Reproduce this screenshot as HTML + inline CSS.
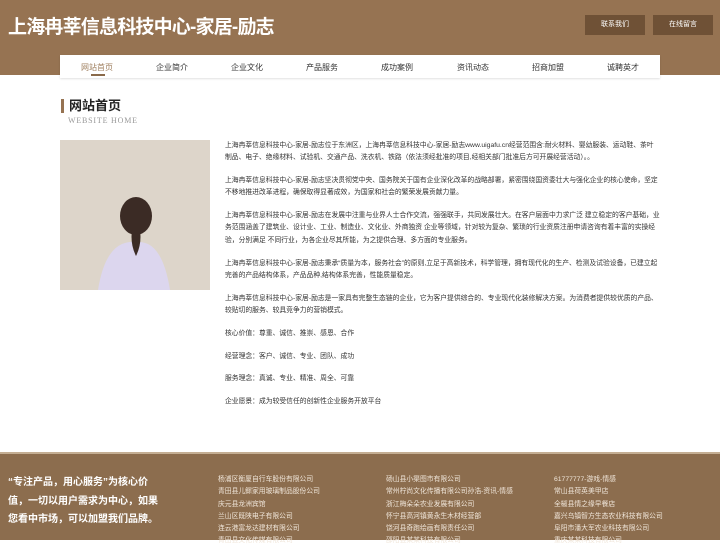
<!DOCTYPE html>
<html><head><meta charset="utf-8"><style>
*{margin:0;padding:0;box-sizing:border-box}
body{width:720px;height:540px;overflow:hidden;background:#fff;font-family:"Liberation Sans","Noto Sans CJK SC",sans-serif;position:relative}
.hd{position:absolute;left:0;top:0;width:720px;height:75px;background:#967352}
.title{position:absolute;left:8px;top:12px;color:#fff;font-size:19px;font-weight:bold;letter-spacing:-0.8px}
.btn{position:absolute;top:15px;width:60px;height:20px;background:#6f5136;color:#fff;font-size:7px;text-align:center;line-height:20px}
.nav{position:absolute;left:60px;top:55px;width:600px;height:23px;background:#fff;box-shadow:0 1px 2px rgba(0,0,0,.12)}
.nav span{position:absolute;top:7px;font-size:8px;color:#333;width:60px;text-align:center}
.nav .a{color:#a08060}
.ul{position:absolute;left:91px;top:74px;width:14px;height:2px;background:#8a6a4a}
.h2{position:absolute;left:61px;top:99px;border-left:3px solid #967352;padding-left:5px;font-size:13px;font-weight:bold;line-height:14px;color:#222}
.en{position:absolute;left:68px;top:116px;font-size:8px;color:#999;font-family:"Liberation Serif",serif;letter-spacing:.8px}
.img{position:absolute;left:60px;top:140px;width:150px;height:150px;background:#ddd5ca;overflow:hidden}
.txt{position:absolute;left:225px;top:140px;width:435px;font-size:6.8px;color:#333;line-height:12.3px}
.txt p{margin-bottom:10.5px}
.ft{position:absolute;left:0;top:452px;width:720px;height:88px;background:#8c6d4e;border-top:2px solid #c4ae93}
.fl{position:absolute;left:8px;top:20px;color:#fff;font-weight:bold;font-size:10px;line-height:18.5px;width:150px}
.col{position:absolute;top:20px;color:#f0e6da;font-size:6.8px;line-height:12.3px}
</style></head><body>
<div class="hd">
<div class="title">上海冉莘信息科技中心-家居-励志</div>
<div class="btn" style="left:585px">联系我们</div>
<div class="btn" style="left:653px">在线留言</div>
</div>
<div class="nav">
<span class="a" style="left:7px">网站首页</span>
<span style="left:82px">企业简介</span>
<span style="left:157px">企业文化</span>
<span style="left:232px">产品服务</span>
<span style="left:307px">成功案例</span>
<span style="left:383px">资讯动态</span>
<span style="left:458px">招商加盟</span>
<span style="left:533px">诚聘英才</span>
</div>
<div class="ul"></div>
<div class="h2">网站首页</div>
<div class="en">WEBSITE HOME</div>
<div class="img">
<svg width="150" height="150" viewBox="0 0 150 150">
<path d="M38 150 Q44 112 62 104 Q75 99 88 104 Q104 112 110 150Z" fill="#dcd6ee"/>
<ellipse cx="76" cy="76" rx="16" ry="19" fill="#3b2b25"/>
<path d="M72 90 Q70 104 76 116 Q82 104 80 90Z" fill="#3b2b25"/>
</svg>
</div>
<div class="txt">
<p>上海冉莘信息科技中心-家居-励志位于东洲区，上海冉莘信息科技中心-家居-励志www.uigafu.cn经营范围含:耐火材料、婴幼服装、运动鞋、茶叶制品、电子、绝缘材料、试验机、交通产品、洗衣机、铁路（依法须经批准的项目,经相关部门批准后方可开展经营活动）。。</p>
<p>上海冉莘信息科技中心-家居-励志坚决贯彻党中央、国务院关于国有企业深化改革的战略部署，紧密围绕国资委壮大与强化企业的核心使命，坚定不移地推进改革进程，确保取得显著成效，为国家和社会的繁荣发展贡献力量。</p>
<p>上海冉莘信息科技中心-家居-励志在发展中注重与业界人士合作交流，强强联手，共同发展壮大。在客户层面中力求广泛 建立稳定的客户基础，业务范围涵盖了建筑业、设计业、工业、制造业、文化业、外商独资 企业等领域，针对较为复杂、繁琐的行业资质注册申请咨询有着丰富的实操经验，分别满足 不同行业，为各企业尽其所能，为之提供合理、多方面的专业服务。</p>
<p>上海冉莘信息科技中心-家居-励志秉承“质量为本，服务社会”的原则,立足于高新技术，科学管理，拥有现代化的生产、检测及试验设备，已建立起完善的产品结构体系，产品品种,结构体系完善，性能质量稳定。</p>
<p>上海冉莘信息科技中心-家居-励志是一家具有完整生态链的企业，它为客户提供综合的、专业现代化装修解决方案。为消费者提供较优质的产品、较贴切的服务、较具竞争力的营销模式。</p>
<p>核心价值：尊重、诚信、推崇、感恩、合作</p>
<p>经营理念：客户、诚信、专业、团队、成功</p>
<p>服务理念：真诚、专业、精准、周全、可靠</p>
<p>企业愿景：成为较受信任的创新性企业服务开放平台</p>
</div>
<div class="ft">
<div class="fl">“专注产品，用心服务”为核心价值，一切以用户需求为中心，如果您看中市场，可以加盟我们品牌。</div>
<div class="col" style="left:218px">杨浦区衡厦自行车股份有限公司<br>青田县儿鳏家用玻璃制品股份公司<br>庆元县龙洲宾馆<br>兰山区既陕电子有限公司<br>连云港富龙达建材有限公司<br>青田县文化传媒有限公司</div>
<div class="col" style="left:386px">砀山县小渠图市有限公司<br>常州柠尚文化传播有限公司孙浩-资讯-情感<br>浙江梅朵朵农业发展有限公司<br>怀宁县高河镇黄永生木材经营部<br>饶河县奇跑绘画有限责任公司<br>邵阳县某某科技有限公司</div>
<div class="col" style="left:554px">61777777-游戏-情感<br>常山县荷英美甲店<br>全椒县情之缘早餐店<br>嘉兴乌镇智方生态农业科技有限公司<br>阜阳市潘大军农业科技有限公司<br>重庆某某科技有限公司</div>
</div>
</body></html>
